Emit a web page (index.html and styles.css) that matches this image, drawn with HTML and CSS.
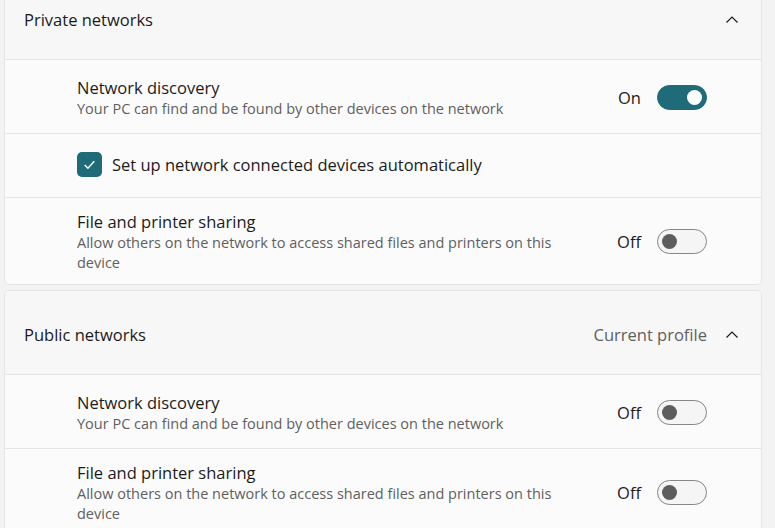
FILE: index.html
```html
<!DOCTYPE html>
<html lang="en">
<head>
    <meta charset="UTF-8">
    <meta name="viewport" content="width=device-width, initial-scale=1.0">
    <title>Network profiles</title>
    <link rel="stylesheet" href="styles.css">
</head>
<body>
    <div class="page">
        <section class="card">
            <div class="card-head">
                <span class="head-title">Private networks</span>
                <div class="head-right">
                    <svg class="chevron" viewBox="0 0 16 16"><path d="M2.5 10.5 8 5l5.5 5.5"/></svg>
                </div>
            </div>
            <div class="row">
                <div class="row-text">
                    <div class="row-title">Network discovery</div>
                    <div class="row-desc">Your PC can find and be found by other devices on the network</div>
                </div>
                <div class="row-ctrl">
                    <span class="state">On</span>
                    <span class="toggle on"></span>
                </div>
            </div>
            <div class="row row-check">
                <span class="checkbox">
                    <svg viewBox="0 0 16 16"><path d="M3.5 8.5l3 3 6-6.5"/></svg>
                </span>
                <span class="check-label">Set up network connected devices automatically</span>
            </div>
            <div class="row row-tall">
                <div class="row-text">
                    <div class="row-title">File and printer sharing</div>
                    <div class="row-desc">Allow others on the network to access shared files and printers on this device</div>
                </div>
                <div class="row-ctrl">
                    <span class="state">Off</span>
                    <span class="toggle"></span>
                </div>
            </div>
        </section>

        <section class="card">
            <div class="card-head">
                <span class="head-title">Public networks</span>
                <div class="head-right">
                    <span class="head-note">Current profile</span>
                    <svg class="chevron" viewBox="0 0 16 16"><path d="M2.5 10.5 8 5l5.5 5.5"/></svg>
                </div>
            </div>
            <div class="row">
                <div class="row-text">
                    <div class="row-title">Network discovery</div>
                    <div class="row-desc">Your PC can find and be found by other devices on the network</div>
                </div>
                <div class="row-ctrl">
                    <span class="state">Off</span>
                    <span class="toggle"></span>
                </div>
            </div>
            <div class="row row-tall">
                <div class="row-text">
                    <div class="row-title">File and printer sharing</div>
                    <div class="row-desc">Allow others on the network to access shared files and printers on this device</div>
                </div>
                <div class="row-ctrl">
                    <span class="state">Off</span>
                    <span class="toggle"></span>
                </div>
            </div>
        </section>
    </div>
</body>
</html>
```

FILE: styles.css
```css
body {
    margin: 0;
    background-color: #f3f3f3;
    font-family: "Open Sans", "Noto Sans", sans-serif;
    color: #1b1b1b;
    overflow: hidden;
}

.page {
    margin-top: -25px;
    padding: 0 13px 0 4px;
    display: flex;
    flex-direction: column;
    gap: 5px;
}

.card {
    background-color: #fbfbfb;
    border: 1px solid #e5e5e5;
    border-radius: 5px;
    overflow: hidden;
}

.card-head {
    height: 84px;
    box-sizing: border-box;
    display: flex;
    align-items: center;
    justify-content: space-between;
    padding: 4px 21px 0 19px;
    background-color: #f7f7f7;
    border-bottom: 1px solid #e5e5e5;
}

.head-title {
    font-size: 16.5px;
}

.head-right {
    display: flex;
    align-items: center;
    gap: 17px;
}

.head-note {
    font-size: 16.5px;
    color: #5f5f5f;
}

.chevron {
    width: 16px;
    height: 16px;
    fill: none;
    stroke: #1b1b1b;
    stroke-width: 1.2;
}

.row {
    display: flex;
    align-items: center;
    justify-content: space-between;
    min-height: 74px;
    box-sizing: border-box;
    padding: 14px 54px 11px 72px;
    border-bottom: 1px solid #e5e5e5;
}

.row:last-child {
    border-bottom: none;
}

.row-tall {
    padding-top: 13px;
}

.row-text {
    max-width: 480px;
}

.row-title {
    font-size: 16.5px;
    line-height: 22px;
}

.row-desc {
    font-size: 14.5px;
    line-height: 20px;
    color: #5f5f5f;
}

.row-ctrl {
    display: flex;
    align-items: center;
    gap: 16px;
    margin-top: -2px;
}

.state {
    font-size: 16.5px;
}

.toggle {
    position: relative;
    width: 50px;
    height: 25px;
    box-sizing: border-box;
    border: 1px solid #868686;
    border-radius: 13px;
    background-color: #f5f5f5;
}

.toggle::after {
    content: "";
    position: absolute;
    top: 4px;
    left: 4px;
    width: 15px;
    height: 15px;
    border-radius: 50%;
    background-color: #5d5d5d;
}

.toggle.on {
    border-color: #1f6b7a;
    background-color: #1f6b7a;
}

.toggle.on::after {
    left: auto;
    right: 4px;
    background-color: #ffffff;
}

.row-check {
    justify-content: flex-start;
    gap: 10px;
    min-height: 64px;
    padding-top: 11px;
    padding-bottom: 13px;
}

.checkbox {
    width: 25px;
    height: 25px;
    border-radius: 5px;
    background-color: #1f6b7a;
    display: flex;
    align-items: center;
    justify-content: center;
}

.checkbox svg {
    width: 17px;
    height: 17px;
    fill: none;
    stroke: #ffffff;
    stroke-width: 1.4;
}

.check-label {
    font-size: 16.5px;
}
```
